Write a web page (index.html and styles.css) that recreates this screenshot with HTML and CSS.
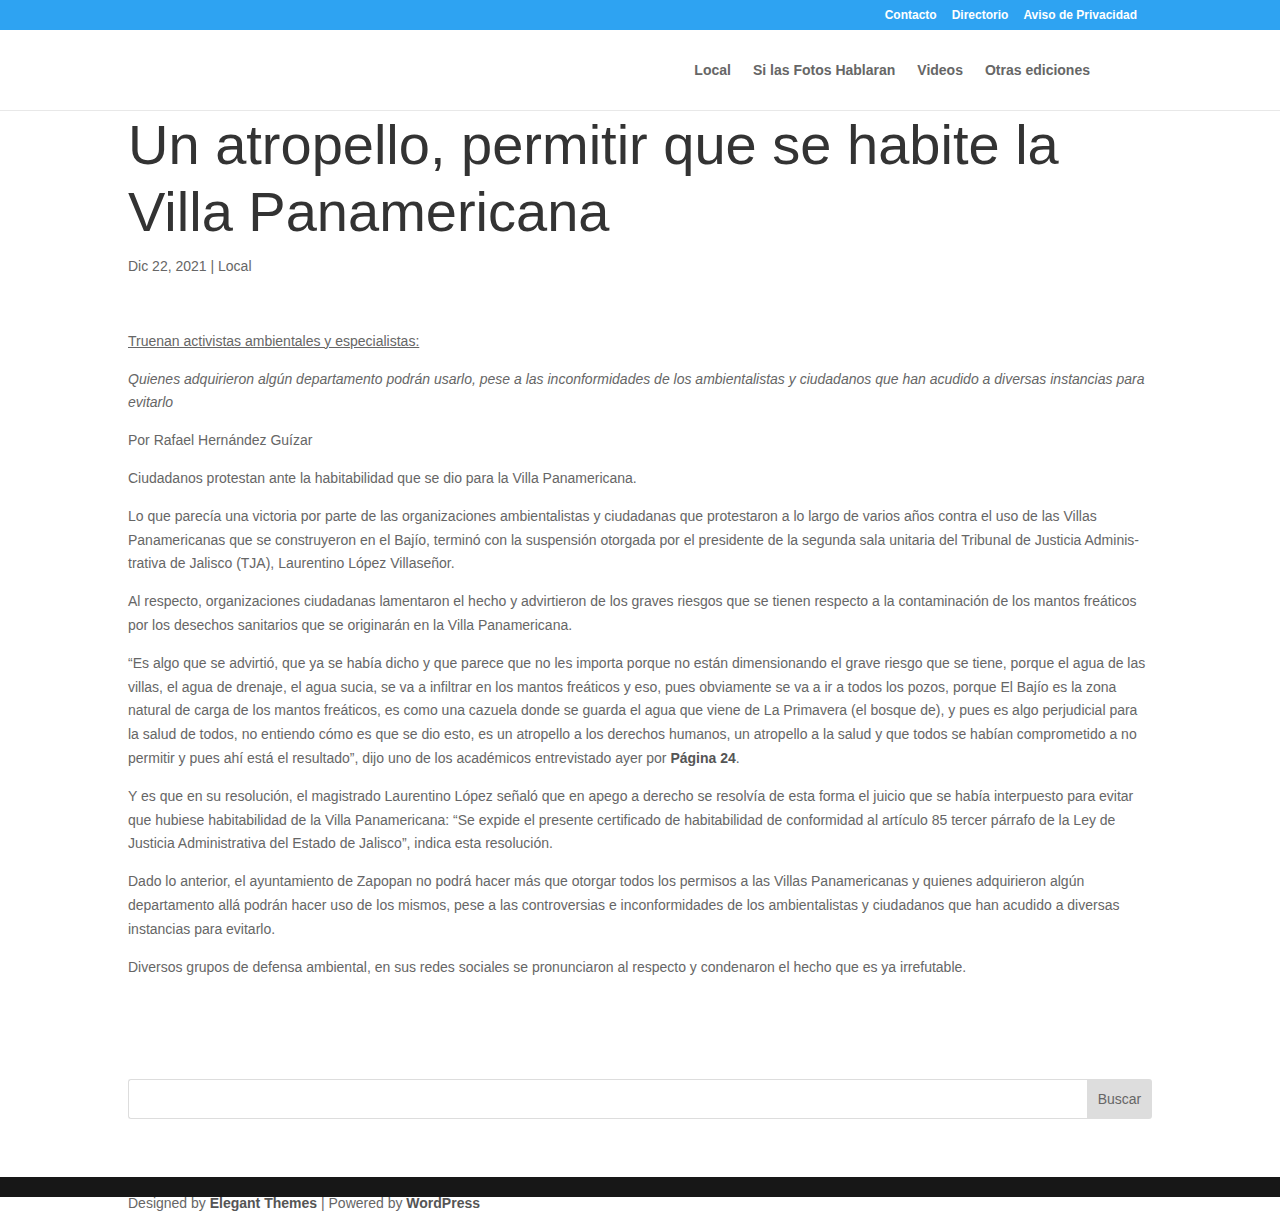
FILE: index.html
```html
<!DOCTYPE html>
<html lang="es">
<head>
<meta charset="utf-8">
<title>Un atropello, permitir que se habite la Villa Panamericana</title>
<link rel="stylesheet" href="styles.css">
</head>
<body>
<div class="topbar">
  <div class="container topbar-inner">
    <a href="#">Contacto</a>
    <a href="#">Directorio</a>
    <a href="#">Aviso de Privacidad</a>
  </div>
</div>
<header class="header">
  <div class="container header-inner">
    <nav class="mainnav">
      <a href="#">Local</a>
      <a href="#">Si las Fotos Hablaran</a>
      <a href="#">Videos</a>
      <a href="#">Otras ediciones</a>
    </nav>
  </div>
</header>
<main class="container">
  <h1 class="title">Un atropello, permitir que se habite la Villa Panamericana</h1>
  <p class="meta">Dic 22, 2021 | <a href="#">Local</a></p>
  <div class="content">
    <p><span class="u">Truenan activistas ambientales y especialistas:</span></p>
    <p><em>Quienes adquirieron algún departamento podrán usarlo, pese a las inconformidades de los ambientalistas y ciudadanos que han acudido a diversas instancias para evitarlo</em></p>
    <p>Por Rafael Hernández Guízar</p>
    <p>Ciudadanos protestan ante la habitabilidad que se dio para la Villa Panamericana.</p>
    <p>Lo que parecía una victoria por parte de las organizaciones ambientalistas y ciudadanas que protestaron a lo largo de varios años contra el uso de las Villas Panamericanas que se construyeron en el Bajío, terminó con la suspensión otorgada por el presidente de la segunda sala unitaria del Tribunal de Justicia Adminis&shy;trativa de Jalisco (TJA), Laurentino López Villaseñor.</p>
    <p>Al respecto, organizaciones ciudadanas lamentaron el hecho y advirtieron de los graves riesgos que se tienen respecto a la contaminación de los mantos freáticos por los desechos sanitarios que se originarán en la Villa Panamericana.</p>
    <p>“Es algo que se advirtió, que ya se había dicho y que parece que no les importa porque no están dimensionando el grave riesgo que se tiene, porque el agua de las villas, el agua de drenaje, el agua sucia, se va a infiltrar en los mantos freáticos y eso, pues obviamente se va a ir a todos los pozos, porque El Bajío es la zona natural de carga de los mantos freáticos, es como una cazuela donde se guarda el agua que viene de La Primavera (el bosque de), y pues es algo perjudicial para la salud de todos, no entiendo cómo es que se dio esto, es un atropello a los derechos humanos, un atropello a la salud y que todos se habían comprometido a no permitir y pues ahí está el resultado”, dijo uno de los académicos entrevistado ayer por <strong>Página 24</strong>.</p>
    <p>Y es que en su resolución, el magistrado Laurentino López señaló que en apego a derecho se resolvía de esta forma el juicio que se había interpuesto para evitar que hubiese habitabilidad de la Villa Panamericana: “Se expide el presente certificado de habitabilidad de conformidad al artículo 85 tercer párrafo de la Ley de Justicia Administrativa del Estado de Jalisco”, indica esta resolución.</p>
    <p>Dado lo anterior, el ayuntamiento de Zapopan no podrá hacer más que otorgar todos los permisos a las Villas Panamericanas y quienes adquirieron algún departamento allá podrán hacer uso de los mismos, pese a las controversias e inconformidades de los ambientalistas y ciudadanos que han acudido a diversas instancias para evitarlo.</p>
    <p>Diversos grupos de defensa ambiental, en sus redes sociales se pronunciaron al respecto y condenaron el hecho que es ya irrefutable.</p>
  </div>
  <form class="search" onsubmit="return false">
    <input class="search-input" type="text" aria-label="Buscar">
    <button class="search-btn" type="submit">Buscar</button>
  </form>
</main>
<footer class="footer">
  <div class="footer-bar"></div>
  <div class="container footer-info">Designed by <a href="#">Elegant Themes</a> | Powered by <a href="#">WordPress</a></div>
</footer>
</body>
</html>
```

FILE: styles.css
```css
* { box-sizing: border-box; }
html, body { margin: 0; padding: 0; }
body {
  font-family: "Liberation Sans", Arial, sans-serif;
  font-size: 14px;
  line-height: 1.7;
  color: #666;
  background: #fff;
  min-height: 1226px;
}
a { text-decoration: none; color: inherit; }
.container { width: 1024px; margin: 0 auto; }

.topbar { background: #2ea3f2; height: 30px; }
.topbar-inner {
  display: flex;
  justify-content: flex-end;
  align-items: center;
  height: 30px;
  padding-right: 15px;
  gap: 15px;
}
.topbar-inner a { color: #fff; font-size: 12px; font-weight: 700; line-height: 12px; }

.header { height: 81px; border-bottom: 1px solid #e8e8e8; }
.header-inner {
  height: 80px;
  display: flex;
  justify-content: flex-end;
  align-items: center;
  padding-right: 62px;
}
.mainnav { display: flex; gap: 22px; }
.mainnav a { font-size: 14px; font-weight: 700; color: #666; line-height: 14px; }

.title {
  margin: 0;
  font-size: 56px;
  line-height: 67px;
  font-weight: 400;
  color: #333;
}
.meta { margin: 10px 0 0; color: #666; }

.content { padding-top: 51px; }
.content p { margin: 0; padding-bottom: 14px; }
.content .u { text-decoration: underline; }
.content strong { color: #555; font-weight: 700; }

.search { display: flex; margin-top: 86px; height: 40px; }
.search-input {
  flex: 1;
  height: 40px;
  border: 1px solid #ddd;
  border-right: none;
  border-radius: 3px 0 0 3px;
  background: #fff;
  margin: 0;
  font: inherit;
}
.search-btn {
  width: 65px;
  height: 40px;
  border: none;
  background: #ddd;
  color: #666;
  font-family: "Liberation Sans", Arial, sans-serif;
  font-size: 14px;
  border-radius: 0 3px 3px 0;
  margin: 0;
  padding: 0;
}

.footer { margin-top: 58px; }
.footer-bar { height: 20px; background: #171717; }
.footer-info {
  line-height: 14px;
  margin-top: -1px;
  color: #666;
  font-size: 14px;
  position: relative;
}
.footer-info a { font-weight: 700; color: #555; }
```
